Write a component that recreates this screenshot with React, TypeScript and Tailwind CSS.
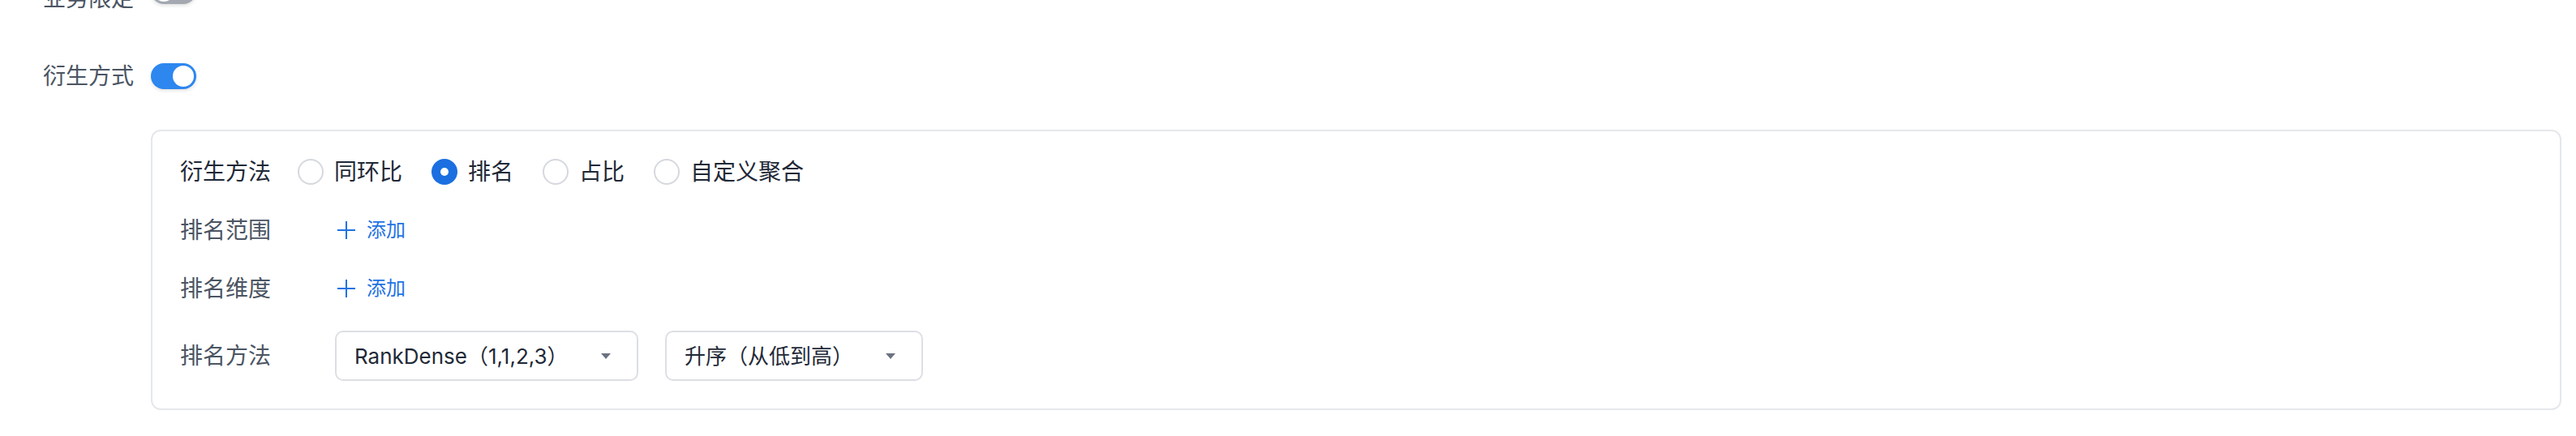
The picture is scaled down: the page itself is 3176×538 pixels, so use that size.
import { useState } from 'react';

const methods = ['同环比', '排名', '占比', '自定义聚合'];

function Toggle({ on }: { on: boolean }) {
    return (
        <span
            className={`flex h-[32px] w-[56px] shrink-0 items-center rounded-full p-[3px] shadow-[0_2px_4px_rgba(0,0,0,0.12)] ${
                on ? 'justify-end bg-[#2d87ef]' : 'justify-start bg-[#a3a8b1]'
            }`}
        >
            <span className="h-[26px] w-[26px] rounded-full bg-white" />
        </span>
    );
}

function Radio({ checked }: { checked: boolean }) {
    return checked ? (
        <span className="flex h-[32px] w-[32px] shrink-0 items-center justify-center rounded-full bg-[#1c6fe0]">
            <span className="h-[10px] w-[10px] rounded-full bg-white" />
        </span>
    ) : (
        <span className="h-[32px] w-[32px] shrink-0 rounded-full border-2 border-[#d5d8de] bg-white" />
    );
}

function AddLink() {
    return (
        <button className="flex items-center gap-[14px] text-[24px] text-[#1f72e4]">
            <svg width="22" height="22" viewBox="0 0 22 22" fill="none" stroke="currentColor" strokeWidth="2">
                <path d="M11 0v22M0 11h22" />
            </svg>
            添加
        </button>
    );
}

function Select({ value, width }: { value: string; width: string }) {
    return (
        <div
            className={`flex h-[62px] ${width} items-center justify-between rounded-[10px] border-2 border-[#dcdfe4] bg-white pl-[22px] pr-[32px] text-[26px] text-[#1f2937]`}
        >
            <span>{value}</span>
            <svg width="12" height="7" viewBox="0 0 12 7">
                <path d="M0 0h12L6 7z" fill="#6b7280" />
            </svg>
        </div>
    );
}

export default function App() {
    const [method, setMethod] = useState('排名');

    return (
        <div className="h-[538px] w-full overflow-hidden bg-white font-['Inter','Noto_Sans_CJK_SC',sans-serif]">
            <div className="pl-[53px] pr-[18px]">
                {/* 业务限定 (cut off at the top) */}
                <div className="mt-[-18px] flex h-[32px] items-center">
                    <span className="w-[133px] text-[28px] text-[#4b5563]">业务限定</span>
                    <span className="mb-[18px]">
                        <Toggle on={false} />
                    </span>
                </div>

                <div className="mt-[64px] flex h-[32px] items-center">
                    <span className="w-[133px] text-[28px] text-[#4b5563]">衍生方式</span>
                    <Toggle on />
                </div>

                <div className="ml-[133px] mt-[50px] flex flex-col gap-[32px] rounded-[12px] border-2 border-[#e5e7eb] pb-[34px] pl-[34px] pt-[30px]">
                    <div className="flex h-[40px] items-center">
                        <span className="mr-[33px] text-[28px] text-[#1f2937]">衍生方法</span>
                        <div className="flex items-center gap-[36px]">
                            {methods.map((m) => (
                                <label
                                    key={m}
                                    onClick={() => setMethod(m)}
                                    className="flex cursor-pointer items-center gap-[13px] text-[28px] text-[#1f2937]"
                                >
                                    <Radio checked={method === m} />
                                    {m}
                                </label>
                            ))}
                        </div>
                    </div>

                    <div className="flex h-[40px] items-center">
                        <span className="w-[194px] text-[28px] text-[#4b5563]">排名范围</span>
                        <AddLink />
                    </div>

                    <div className="flex h-[40px] items-center">
                        <span className="w-[194px] text-[28px] text-[#4b5563]">排名维度</span>
                        <AddLink />
                    </div>

                    <div className="flex items-center">
                        <span className="w-[191px] text-[28px] text-[#4b5563]">排名方法</span>
                        <div className="flex items-center gap-[33px]">
                            <Select value="RankDense（1,1,2,3）" width="w-[374px]" />
                            <Select value="升序（从低到高）" width="w-[318px]" />
                        </div>
                    </div>
                </div>
            </div>
        </div>
    );
}
